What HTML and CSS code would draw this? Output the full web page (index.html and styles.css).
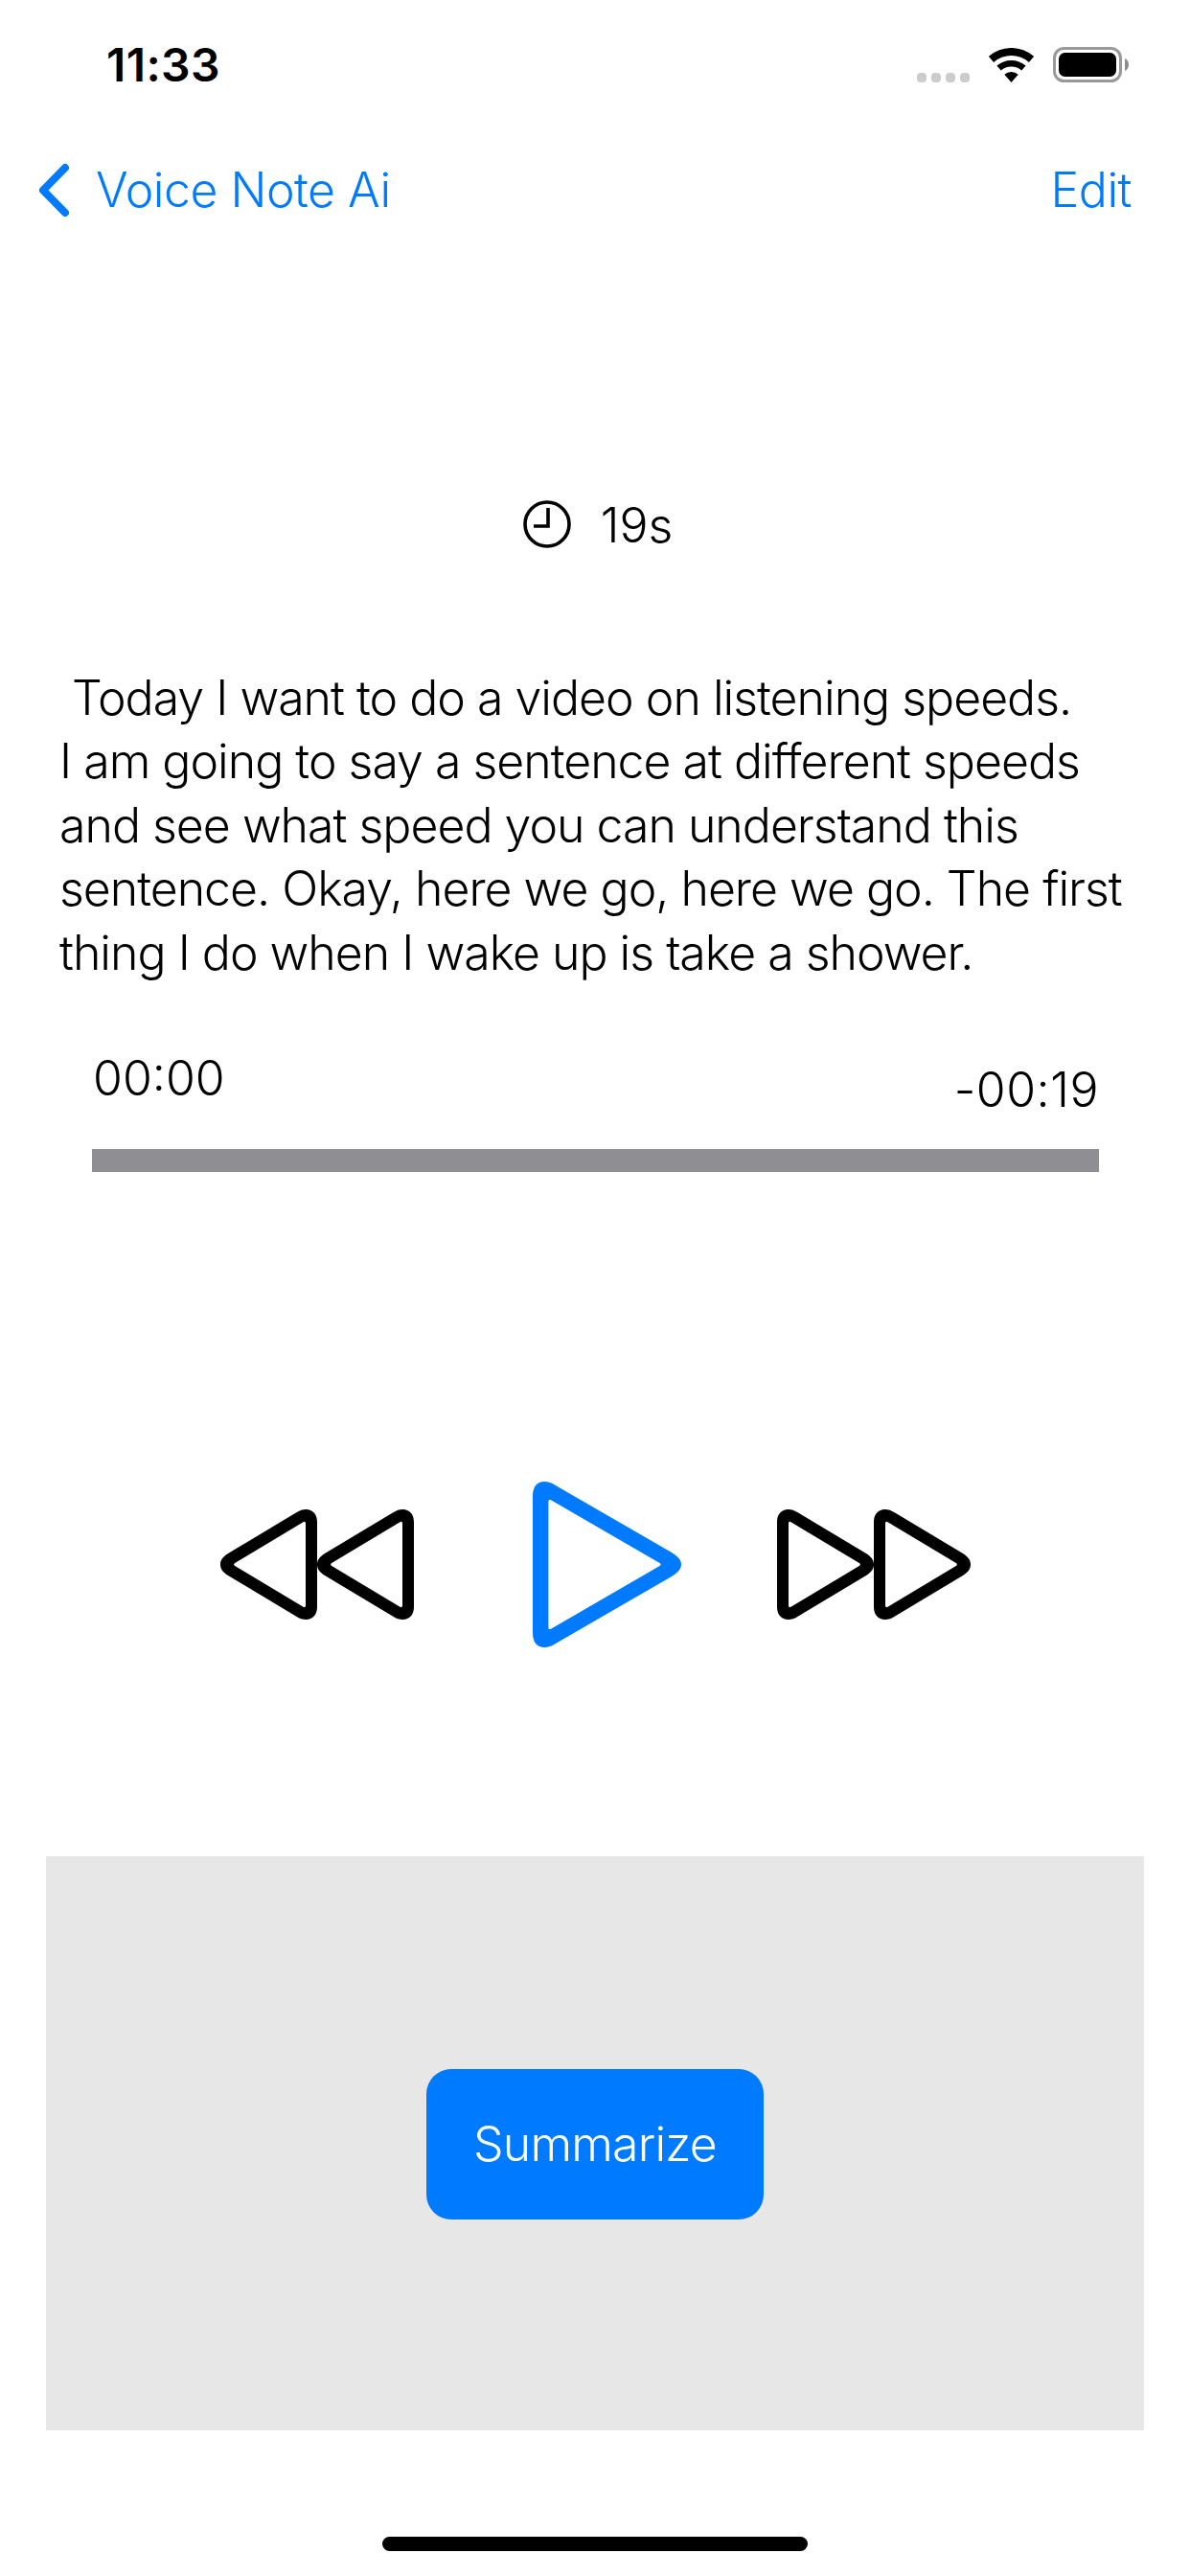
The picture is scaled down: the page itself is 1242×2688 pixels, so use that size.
FILE: index.html
```html
<!DOCTYPE html>
<html lang="en">
<head>
<meta charset="utf-8">
<title>Voice Note</title>
<link rel="stylesheet" href="styles.css">
</head>
<body>
<svg class="defs" width="0" height="0" aria-hidden="true">
  <symbol id="tri" viewBox="0 0 101 115">
    <path fill-rule="evenodd" d="M0 13C0 5 5 0 11.500 0C15 0 18.500 1.200 21.700 3.300L93 46C98.500 49.500 101 53 101 57.500C101 62 98.500 65.500 93 69L21.700 111.700C18.500 113.800 15 115 11.500 115C5 115 0 110 0 102ZM12 15V100C12 102 13 102.600 14.500 101.800L85.800 59C87.200 58 87.200 57 85.800 56L14.500 13.200C13 12.400 12 13 12 15Z"/>
  </symbol>
</svg>
<main class="page">
  <header class="status">
    <span class="clock-time">11:33</span>
    <div class="status-icons">
      <div class="dots"><i></i><i></i><i></i><i></i></div>
      <svg class="wifi" width="47" height="36" viewBox="0 0 47 36"><path d="M-.1 8.800A36 36 0 0 1 47.100 8.800L41.900 14.900A28 28 0 0 0 5.100 14.900Z"/><path d="M8.400 18.600A23 23 0 0 1 38.600 18.600L34.300 23.500A16.500 16.500 0 0 0 12.700 23.500Z"/><path d="M16.300 27.700A11 11 0 0 1 30.700 27.700L23.500 36Z"/></svg>
      <svg class="battery" width="79" height="37" viewBox="0 0 79 37"><rect x="1.500" y="1.500" width="69" height="34" rx="10" fill="none" stroke="#999" stroke-width="3"/><rect x="6" y="6" width="60" height="25" rx="6.500"/><path d="M75 12C77.500 13 79 15.500 79 18.500C79 21.500 77.500 24 75 25Z" fill="#8e8e8e"/></svg>
    </div>
  </header>
  <nav class="nav">
    <svg class="chevron" width="33" height="57" viewBox="0 0 33 57"><path d="M28 5L5 28.500L28 52" fill="none" stroke="#007aff" stroke-width="8" stroke-linecap="round" stroke-linejoin="round"/></svg>
    <a class="back">Voice Note Ai</a>
    <a class="edit">Edit</a>
  </nav>
  <div class="duration">
    <svg class="clock-icon" width="50" height="50" viewBox="0 0 50 50"><circle cx="25" cy="25" r="23" fill="none" stroke="#000" stroke-width="3.600"/><path d="M26 8V27H11" fill="none" stroke="#000" stroke-width="3.600"/></svg>
    <span class="duration-text">19s</span>
  </div>
  <p class="transcript"> Today I want to do a video on listening speeds.<br>I am going to say a sentence at different speeds and see what speed you can understand this sentence. Okay, here we go, here we go. The first thing I do when I wake up is take a shower.</p>
  <div class="times">
    <span class="elapsed">00:00</span>
    <span class="remaining">-00:19</span>
  </div>
  <div class="progress"></div>
  <div class="controls">
    <div class="skip skip-back">
      <svg width="101" height="115"><use href="#tri"/></svg>
      <svg width="101" height="115"><use href="#tri"/></svg>
    </div>
    <svg class="play" width="155" height="173" viewBox="0 0 155 173"><path fill="#007aff" fill-rule="evenodd" d="M0 15C0 5 5 0 12 0C16 0 20 1.500 23 3.500L145 74C151.500 78 155 82 155 86.500C155 91 151.500 95 145 99L23 169.500C20 171.500 16 173 12 173C5 173 0 168 0 158ZM16.400 20.500V152.500C16.400 154 17.500 154.500 19 153.700L132.500 88C134 87 134 86 132.500 85L19 19.300C17.500 18.500 16.400 19 16.400 20.500Z"/></svg>
    <div class="skip">
      <svg width="101" height="115"><use href="#tri"/></svg>
      <svg width="101" height="115"><use href="#tri"/></svg>
    </div>
  </div>
  <section class="panel">
    <button class="summarize">Summarize</button>
  </section>
  <div class="home"></div>
</main>
</body>
</html>
```
FILE: styles.css
```css
* { box-sizing: border-box; }
html, body { margin: 0; padding: 0; background: #fff; }
body { font-family: Inter, "Liberation Sans", sans-serif; font-weight: 350; color: #000; }
.defs { position: absolute; }
.page { width: 1242px; height: 2688px; overflow: hidden; display: flex; flex-direction: column; }

.status { height: 132px; display: flex; align-items: flex-start; padding: 40px 64px 0 111px; }
.clock-time { font-size: 48px; font-weight: 600; line-height: 56px; letter-spacing: .4px; }
.status-icons { margin-left: auto; display: flex; align-items: flex-end; padding-top: 9px; height: 46px; }
.dots { display: flex; gap: 5px; margin-right: 20px; }
.dots i { width: 10px; height: 10px; border-radius: 4px; background: #ccc; display: block; }
.wifi { margin-right: 20px; }
.battery { display: block; }

.nav { height: 132px; display: flex; align-items: center; padding: 0 61px 0 40px; color: #007aff; font-size: 50px; letter-spacing: -.5px; }
.chevron { margin-right: 27px; }
.edit { margin-left: auto; }

.duration { margin-top: 258px; height: 50px; padding-left: 6px; display: flex; justify-content: center; align-items: center; gap: 31px; font-size: 50px; }
.duration-text { padding-top: 1px; }
.clock-icon { display: block; }

.transcript { margin: 123px 0 0; padding: 0 50px 0 62px; height: 332px; font-size: 50px; line-height: 66.4px; letter-spacing: -1px; white-space: pre-wrap; }

.times { margin-top: 68px; height: 72px; padding: 0 95px 0 97px; display: flex; justify-content: space-between; font-size: 50px; line-height: 60px; }
.elapsed { align-self: flex-start; }
.remaining { align-self: flex-end; letter-spacing: .5px; }

.progress { margin: 32px 95px 0 96px; height: 24px; background: #8e8e93; }

.controls { margin-top: 323px; height: 173px; padding: 0 0 0 230px; display: flex; align-items: center; }
.skip { display: flex; }
.skip svg { display: block; }
.skip-back { transform: scaleX(-1); }
.play { display: block; margin: 0 100px 0 124px; }

.panel { margin: 218px 48px 0; height: 599px; background: #e7e7e7; display: flex; align-items: center; justify-content: center; }
.summarize { width: 352px; height: 157px; border: 0; border-radius: 26px; background: #007aff; color: #fff; font: inherit; font-size: 50px; letter-spacing: -.8px; padding: 0; margin-top: 1px; }

.home { margin: 111px auto 0; width: 444px; height: 15px; border-radius: 8px; background: #000; }
```
